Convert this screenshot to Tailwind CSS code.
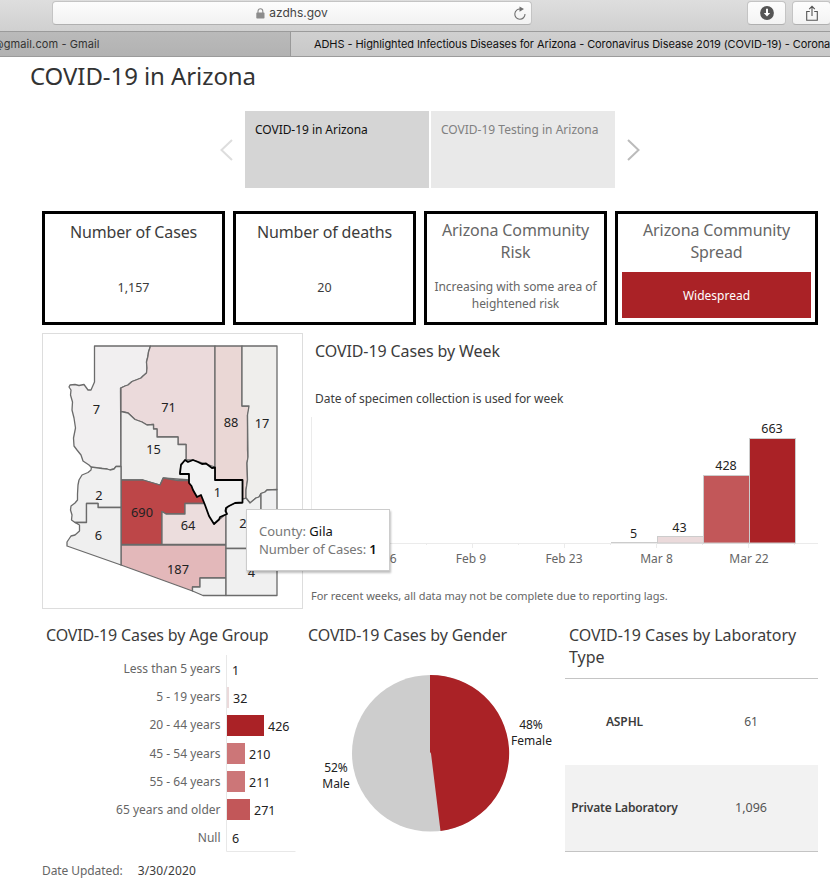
<!DOCTYPE html>
<html lang="en">
<head>
<meta charset="utf-8">
<title>ADHS - COVID-19 in Arizona</title>
<script src="https://cdn.jsdelivr.net/npm/@tailwindcss/browser@4"></script>
</head>
<body class="w-[830px] h-[887px] overflow-hidden bg-white font-['Noto_Sans',sans-serif] text-[#3c3c3c]">
<header class="font-['Inter',sans-serif]">
  <div class="flex h-[31px] pt-px bg-linear-to-b from-[#dedede] to-[#d0d0d0]">
    <div class="relative ml-[52px] flex h-[24px] w-[480px] shrink-0 items-center justify-center gap-[4px] rounded-[4px] border border-[#c4c4c4] border-b-[#b0b0b0] bg-linear-to-b from-[#fdfdfd] to-[#f2f2f2]">
      <svg class="h-[11px] w-[9px]" viewBox="0 0 9 11"><rect x="0.3" y="4.6" width="8.2" height="6" rx="0.8" fill="#8c8c8c"/><path d="M2 5V3.2a2.4 2.4 0 0 1 4.8 0V5" fill="none" stroke="#8c8c8c" stroke-width="1.1"/></svg>
      <span class="text-[12px] leading-[16px] tracking-[-0.02px] text-[#444]">azdhs.gov</span>
      <svg class="absolute right-[4px] top-[4px] h-[15px] w-[14px]" viewBox="0 0 14 15"><path d="M7.6 3.1A5.1 5.1 0 1 0 12 8" fill="none" stroke="#707070" stroke-width="1.1"/><path d="M6.5 0.6 L11 3.1 L6.5 5.8Z" fill="#707070"/></svg>
    </div>
    <div class="ml-[215px] flex h-[24px] w-[39px] shrink-0 items-center justify-center rounded-[4px] border border-[#c4c4c4] border-b-[#b0b0b0] bg-linear-to-b from-[#fdfdfd] to-[#f3f3f3]">
      <svg class="h-[14px] w-[14px]" viewBox="0 0 14 14"><circle cx="7" cy="7" r="6.9" fill="#555"/><path d="M7 2.8V8" stroke="#fff" stroke-width="2"/><path d="M3.8 6.9h6.4L7 10.6Z" fill="#fff"/></svg>
    </div>
    <div class="ml-[6px] flex h-[24px] w-[39px] shrink-0 items-center justify-center rounded-[4px] border border-[#c4c4c4] border-b-[#b0b0b0] bg-linear-to-b from-[#fdfdfd] to-[#f3f3f3]">
      <svg class="h-[17px] w-[12px]" viewBox="0 0 12 17"><path d="M3.8 6.5H0.7V15.3H11.3V6.5H8.2M6 11V1.5M3.2 4.2L6 1.3L8.8 4.2" fill="none" stroke="#555" stroke-width="1.1"/></svg>
    </div>
  </div>
  <div class="flex h-[26px] overflow-hidden whitespace-nowrap border-y border-[#9b9b9b] text-[11px] leading-[24px]">
    <div class="w-[290px] shrink-0 bg-linear-to-b from-[#bababa] to-[#b2b2b2] text-[#333]"><span class="ml-[-7px] inline-block tracking-[0.1px]">@gmail.com - Gmail</span></div>
    <div class="flex-1 border-l border-[#999] bg-linear-to-b from-[#d0d0d0] to-[#c8c8c8] pl-[23px] text-[#111]"><span class="inline-block tracking-[-0.08px]">ADHS - Highlighted Infectious Diseases for Arizona - Coronavirus Disease 2019 (COVID-19) - Coronavirus</span></div>
  </div>
</header>

<main>
  <h1 class="h-[54px] pl-[30px] text-[24px] leading-[38px] tracking-[-0.08px] text-[#333]">COVID-19 in Arizona</h1>

  <nav class="flex h-[77px] items-stretch pl-[220px] text-[12px] leading-[16px]">
    <svg class="mr-[12px] h-[77px] w-[13px]" viewBox="0 0 13 77"><path d="M12 29L1.5 39L12 49" fill="none" stroke="#ddd" stroke-width="2"/></svg>
    <div class="mr-[2px] w-[184px] bg-[#d5d5d5] pl-[10px] pt-[11px] text-[#111]"><span class="tracking-[-0.05px]">COVID-19 in Arizona</span></div>
    <div class="w-[184px] bg-[#e9e9e9] pl-[10px] pt-[11px] text-[#808080]"><span>COVID-19 Testing in Arizona</span></div>
    <svg class="ml-[12px] h-[77px] w-[13px]" viewBox="0 0 13 77"><path d="M1 29L11.5 39L1 49" fill="none" stroke="#bbb" stroke-width="2"/></svg>
  </nav>

  <section class="mt-[23px] ml-[42px] grid h-[114px] grid-cols-[183px_183px_183px_203px] gap-[8px] text-center text-[12.5px]">
    <div class="border-3 border-black pt-[7px]"><h2 class="text-[16px] leading-[22px] tracking-[-0.16px]">Number of Cases</h2><p class="mt-[36px] leading-[17px]">1,157</p></div>
    <div class="border-3 border-black pt-[7px]"><h2 class="text-[16px] leading-[22px] tracking-[-0.14px]">Number of deaths</h2><p class="mt-[36px] leading-[17px]">20</p></div>
    <div class="border-3 border-black pt-[5px] text-[#666]"><h2 class="text-[16px] leading-[22px] tracking-[-0.1px]">Arizona Community<br>Risk</h2><p class="mt-[15px] whitespace-nowrap text-[12px] leading-[17px] tracking-[-0.04px]">Increasing with some area of<br>heightened risk</p></div>
    <div class="border-3 border-black px-[4px] pt-[5px] text-[#666]"><h2 class="text-[16px] leading-[22px] tracking-[-0.1px]">Arizona Community<br>Spread</h2><p class="mt-[9px] h-[46px] bg-[#aa2226] text-[12px] leading-[48px] text-white">Widespread</p></div>
  </section>

  <section class="relative mt-[8px] ml-[42px] flex h-[276px]">
    <svg class="h-[276px] w-[261px] shrink-0 border border-[#ddd]" viewBox="43 334 259 274" font-size="12.800" fill="#222" text-anchor="middle">
      <g stroke="#6b6b6b" stroke-width="1.3" stroke-linejoin="round">
        <path fill="#f1eff0" d="M94.500 346H150.500L148.500 352L148 356L146.500 362L147 368L146.500 373L143 376L141 378L136 380L132 381.500L128 385L125 386L120.500 388V392L121 466.500H116L114 469L110 470L107 469L102 468.500L92 468L89 465L83 461L81 455L77 450L74 446L73.500 438L75.500 428L74 418L72 410L72.500 402L70.500 395L71 390L69 387L70 385L75 384.500L79 385.500L84 384.500L88 390H91L94.500 382Z"/>
        <path fill="#ebdadb" d="M150.500 346H215V467L206 464L193 460L186 460V444.500H178V437H157V429H153.500V424.500L147 425L142 422L135 419.500L128 413L121 411.500V388L125 386L128 385L132 381.500L136 380L141 378L143 376L146.500 373L147 368L146.500 362L148 356L148.500 352Z"/>
        <path fill="#efeeed" d="M121 411.500L128 413L135 419.500L142 422L147 425L153.500 424.500V429H157V437H178V444.500H186V460L181 464L180 473H188L190 480L163 478L160 485L143 480H121Z"/>
        <path fill="#bd4648" d="M121 480H143L160 485L163.500 478L178 480.500H190L197 497L201 495L205 503.500H185V514H166L162 511.500V544.500H121Z"/>
        <path fill="#ecdddd" d="M205 503.500H185V514H166L162 511.500V544.500H226V514L214 524Z"/>
        <path fill="#e3b8ba" d="M121 545H226V578H200V587H192.500V591L121 565Z"/>
        <path fill="#f0f0f0" d="M226 578H200V587H192.500V591L203 595.500H226Z"/>
        <path fill="#ead7d5" d="M215 346H242V406H249L248.500 412L247.500 415L247.500 450L248 457L247 463L247.500 480L246 490V499H242.500V480H215Z"/>
        <path fill="#efeeec" d="M242 346H277V489.500L267 490L265 492L261 493.500L259 497L256 498L250 503L246 498V490L247.500 480L247 463L248 457L247.500 415L249 406H242Z"/>
        <path fill="#f0f0f0" d="M242.500 499L246 498L250 503L256 498L259 497L261 493.500V548.500H226V512L227 507L235 503H242Z"/>
        <path fill="#efeff0" d="M261 493.500L265 492L267 490L277 489.500V548.500H261Z"/>
        <path fill="#f0f0f0" d="M226 548.500H277V595.500H226Z"/>
        <path fill="#f0f0f0" d="M91.500 467L102 468.500L107 469L110 470L114 469L116 466.500H121V507.500H98V503.500H86.500V522.500H75L71.500 520L72 515L70.500 510L71 506L75 503L77.500 500V494L78 485L79 480L82 475L88 472.500L91 470Z"/>
        <path fill="#efefef" d="M86.500 503.500H98V507.500H121V565L67 546V542L71 536L75 535L79.500 531V525L75 522.500H86.500Z"/>
      </g>
      <path fill="#f2f2f2" stroke="#000" stroke-width="1.8" stroke-linejoin="round" d="M180 473L181 465L185 460L188 462L193 460L198 462L202 464L206 463.500L212 468L215 467.500V480H242.500V502.500L235 503L229 506L226 508L225.500 511L227 514L220 517L219 519.500L214 524L209 516L205 505L201 495L197 497L193 490L191.500 486L189 483V474H180Z"/>
      <text x="96.500" y="414">7</text><text x="168.500" y="412">71</text><text x="153.500" y="454">15</text><text x="231" y="427">88</text><text x="262" y="428">17</text>
      <text x="99" y="500">2</text><text x="142" y="517">690</text><text x="188" y="530">64</text><text x="98.500" y="540">6</text><text x="217.500" y="497">1</text><text x="243" y="528">2</text><text x="178" y="574">187</text><text x="251.500" y="577">4</text>
    </svg>
    <div class="ml-[8px] w-[507px]">
      <h2 class="pl-[4px] pt-[7px] text-[16px] leading-[22px] tracking-[-0.1px]"><span>COVID-19 Cases by Week</span></h2>
      <p class="mt-[28px] pl-[4px] text-[12px] leading-[17px] tracking-[-0.03px]"><span>Date of specimen collection is used for week</span></p>
      <svg class="mt-[8px] h-[160px] w-[507px]" viewBox="311 415 507 160" font-size="12.5" text-anchor="middle">
        <path d="M311.500 417V543M311 543.500H818M472.500 544V548M564.500 544V548M656.500 544V548M748.500 544V548M426.500 544V545M518.500 544V545M610.500 544V545M702.500 544V545M794.500 544V545" stroke="#ebebeb"/>
        <path d="M611 542.500H657" stroke="#ccc"/>
        <g stroke="#ccc"><rect x="657.500" y="536.500" width="46" height="6.500" fill="#ebdadb"/><rect x="703.500" y="475.500" width="46" height="67.500" fill="#c25759"/><rect x="749.500" y="438.500" width="46" height="104.500" fill="#aa2226"/></g>
        <g fill="#222"><text x="633.500" y="537.500">5</text><text x="679.500" y="531.500">43</text><text x="726" y="470">428</text><text x="772" y="433">663</text></g>
        <g fill="#666" font-size="12"><text x="379.500" y="563">Jan 26</text><text x="471" y="563">Feb 9</text><text x="564" y="563">Feb 23</text><text x="656.500" y="563">Mar 8</text><text x="749" y="563">Mar 22</text></g>
      </svg>
      <p class="mt-[13px] text-[11px] leading-[16px] tracking-[-0.02px] text-[#666]"><span>For recent weeks, all data may not be complete due to reporting lags.</span></p>
    </div>
    <div class="absolute left-[204px] top-[176px] h-[62px] w-[144px] border border-[#ccc] bg-white pl-[12px] pt-[12px] text-[13px] leading-[18px] whitespace-nowrap text-[#777] shadow-[1px_2px_2px_rgba(0,0,0,0.25)]">
      <p><span>County: <b class="font-normal text-[#111]">Gila</b></span></p><p><span class="tracking-[-0.1px]">Number of Cases: <b class="font-semibold text-[#111]">1</b></span></p>
    </div>
  </section>

  <section class="ml-[42px] flex h-[246px]">
    <div class="w-[262px]">
      <h2 class="pl-[4px] pt-[15px] text-[16px] leading-[22px] tracking-[-0.15px]"><span>COVID-19 Cases by Age Group</span></h2>
      <svg class="mt-[4px] h-[204px] w-[262px]" viewBox="42 650 262 204" font-size="12.5">
        <path d="M226.500 655V851.500H295.500" fill="none" stroke="#e8e8e8"/>
        <rect x="227" y="687" width="2" height="21" fill="#ebdadb"/><rect x="227" y="715" width="37" height="21" fill="#aa2226"/><rect x="227" y="743" width="18" height="21" fill="#cc7678"/><rect x="227" y="771" width="18" height="21" fill="#cc7678"/><rect x="227" y="799" width="23" height="21" fill="#c25759"/>
        <g fill="#666" text-anchor="end" font-size="12"><text x="220.500" y="673">Less than 5 years</text><text x="220.500" y="701">5 - 19 years</text><text x="220.500" y="729">20 - 44 years</text><text x="220.500" y="758">45 - 54 years</text><text x="220.500" y="786">55 - 64 years</text><text x="220.500" y="814">65 years and older</text><text x="220.500" y="842">Null</text></g>
        <g fill="#222"><text x="232" y="675">1</text><text x="233" y="703">32</text><text x="268" y="731">426</text><text x="249" y="759">210</text><text x="249" y="787">211</text><text x="254" y="815">271</text><text x="232" y="843">6</text></g>
      </svg>
    </div>
    <div class="w-[261px]">
      <h2 class="pl-[4px] pt-[15px] text-[16px] leading-[22px] tracking-[-0.12px]"><span>COVID-19 Cases by Gender</span></h2>
      <svg class="mt-[4px] h-[204px] w-[261px]" viewBox="304 650 261 204" font-size="12" fill="#222" text-anchor="middle">
        <circle cx="430.300" cy="753.300" r="78.300" fill="#cdcdcd"/>
        <path d="M430 675A78.300 78.300 0 0 1 440.500 831L431 753.500L430 752Z" fill="#aa2226"/>
        <text x="531" y="729">48%</text><text x="531.500" y="745">Female</text><text x="336" y="772">52%</text><text x="336" y="788">Male</text>
      </svg>
    </div>
    <div class="w-[253px]">
      <h2 class="h-[69px] pl-[4px] pt-[15px] text-[16px] leading-[22px] tracking-[-0.04px]"><span>COVID-19 Cases by Laboratory<br>Type</span></h2>
      <div class="h-[174px] border-y border-[#c4c4c4] text-[12px]">
        <div class="flex h-[86px] items-center"><b class="w-[119px] text-center font-semibold tracking-[-0.1px]">ASPHL</b><span class="w-[134px] text-center text-[#555]">61</span></div>
        <div class="flex h-[86px] items-center bg-[#f2f2f2]"><b class="w-[119px] text-center font-semibold whitespace-nowrap tracking-[-0.15px]">Private Laboratory</b><span class="w-[134px] pt-px text-center text-[12.5px] text-[#555]">1,096</span></div>
      </div>
    </div>
  </section>
  <footer class="ml-[42px] mt-[7px] flex gap-[15px] text-[12px] leading-[17px] text-[#666]"><span class="tracking-[-0.08px]">Date Updated:</span><span class="tracking-[0.15px] text-[#3c3c3c]">3/30/2020</span></footer>
</main>
</body>
</html>
